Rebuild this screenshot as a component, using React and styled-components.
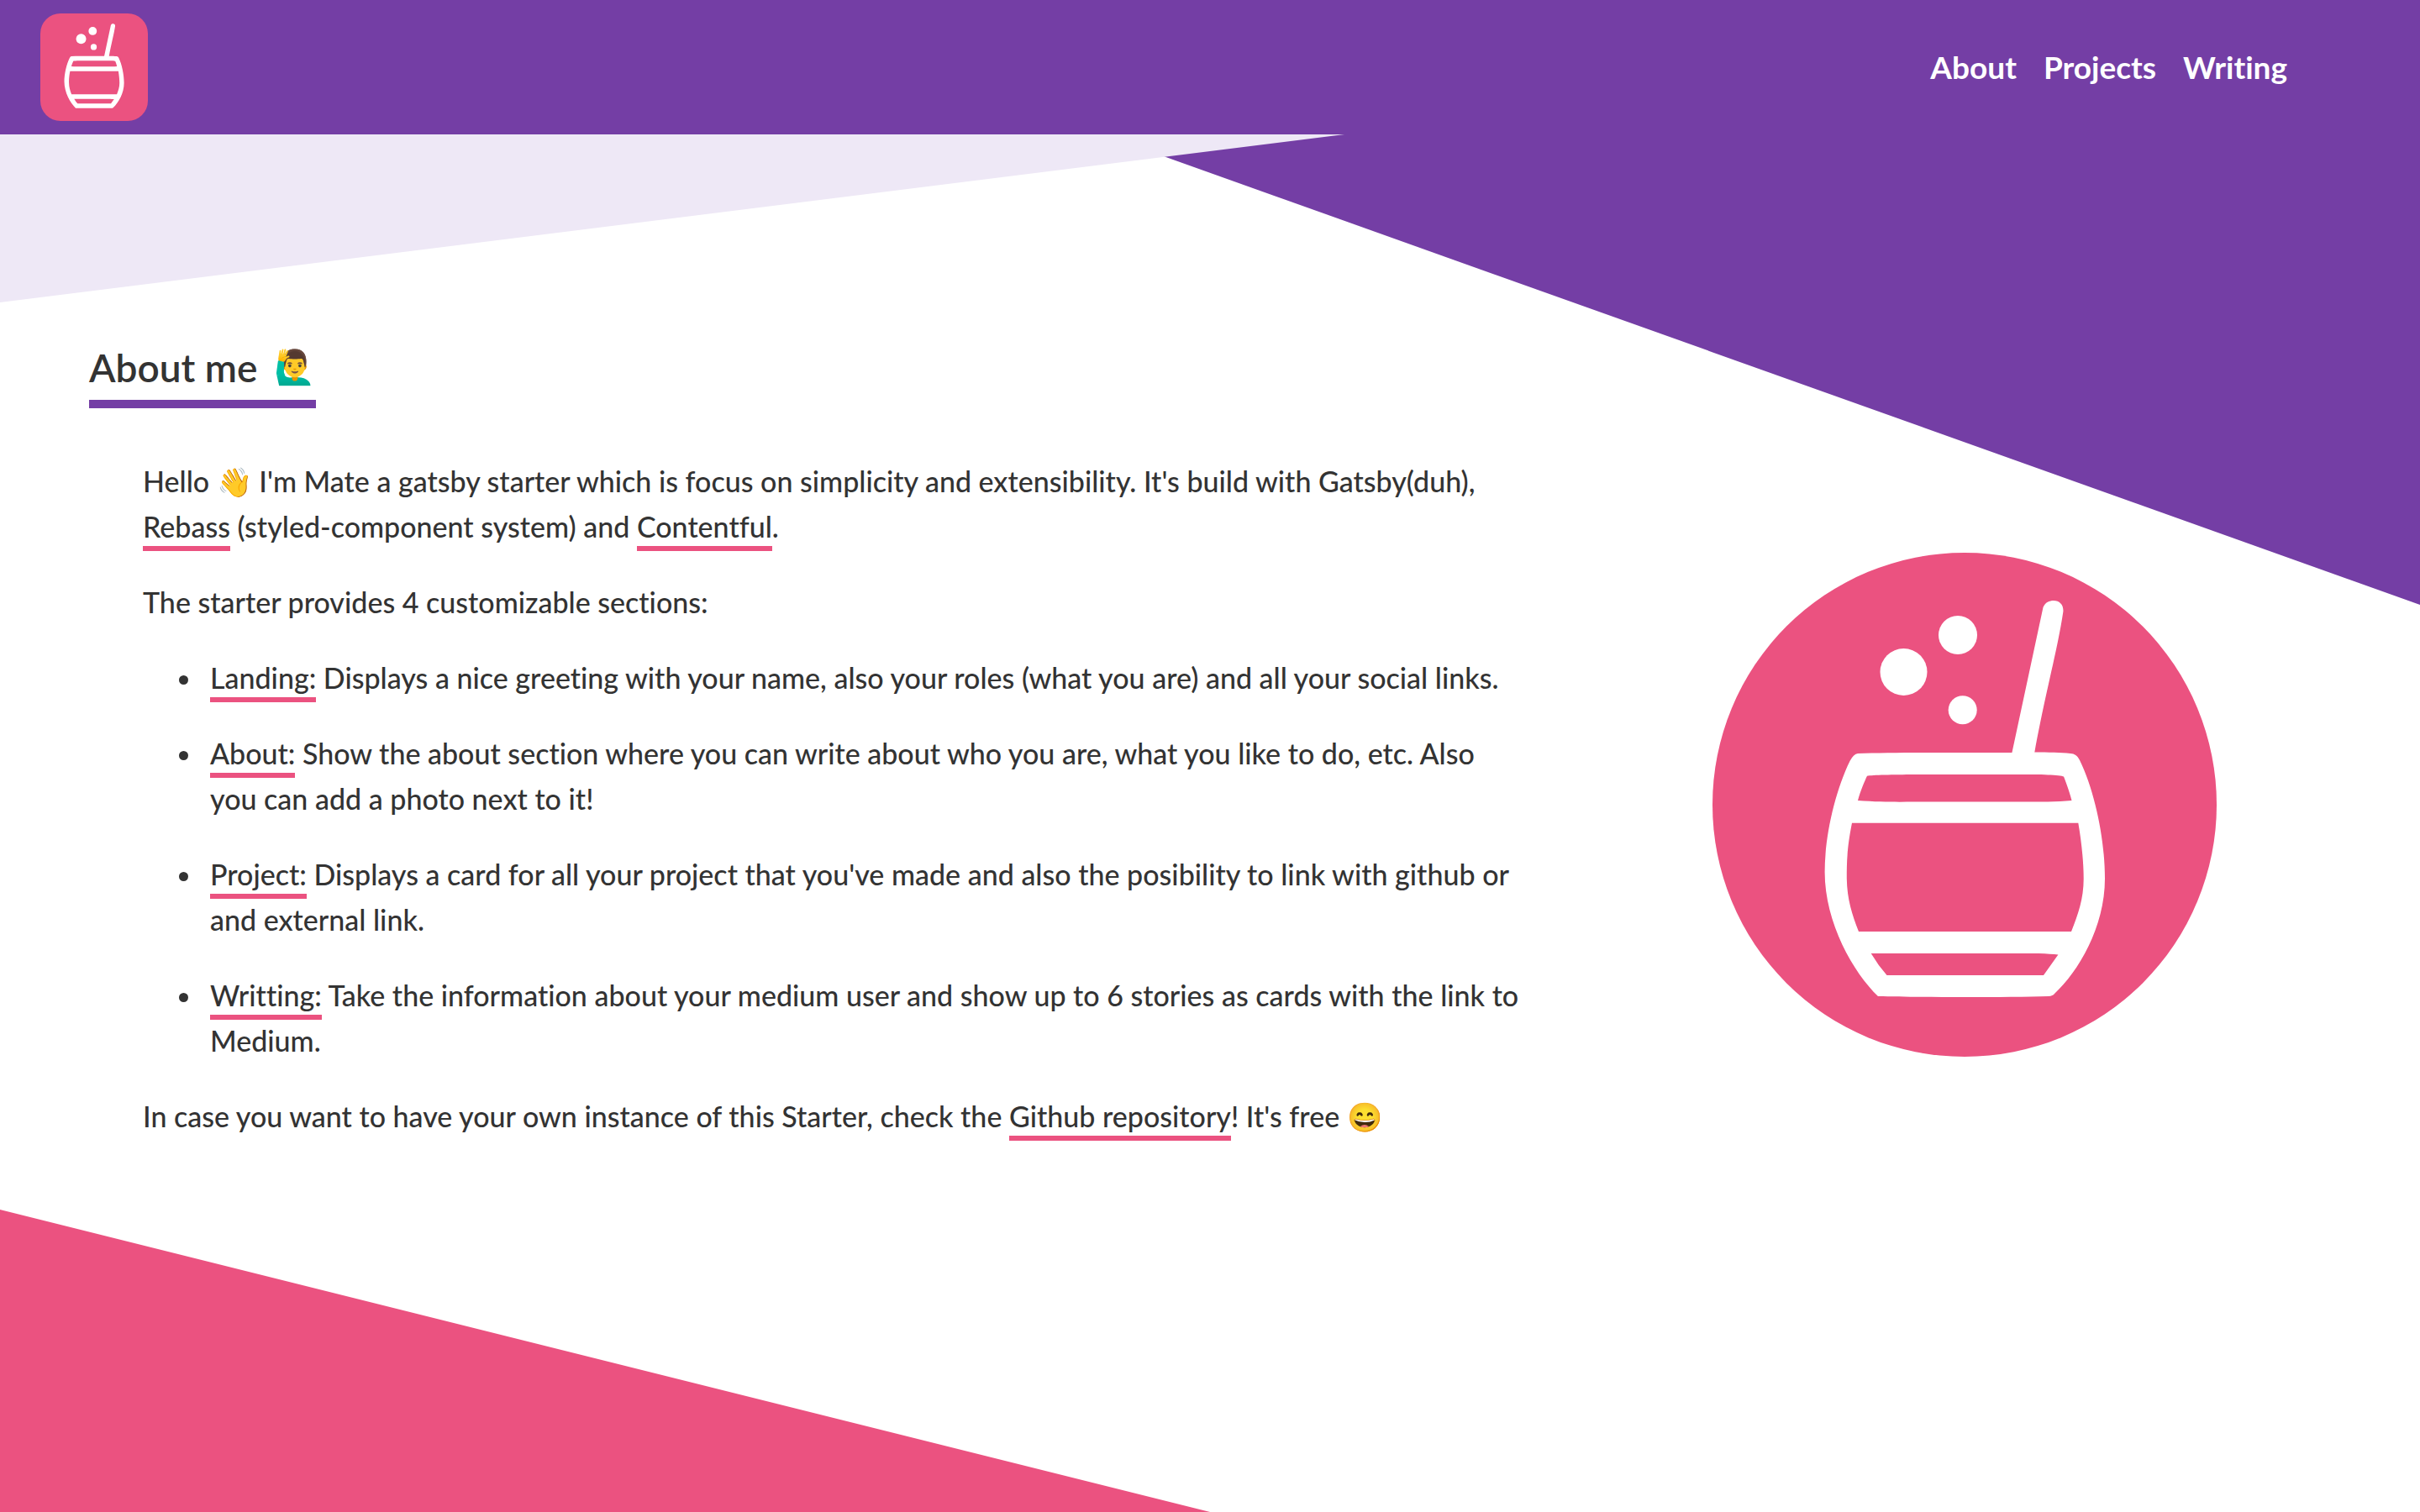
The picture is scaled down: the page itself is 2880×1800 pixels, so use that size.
import React from 'react';
import styled, { createGlobalStyle, ThemeProvider } from 'styled-components';

const theme = {
  colors: {
    background: '#ffffff',
    backgroundDark: '#eee8f6',
    text: '#333333',
    primary: '#743ea5',
    secondary: '#eb5280',
  },
};

const GlobalStyle = createGlobalStyle`
  *, *::before, *::after {
    box-sizing: border-box;
  }

  body {
    margin: 0;
    color: ${({ theme: t }) => t.colors.text};
    background: ${({ theme: t }) => t.colors.background};
    font-family: Lato, "Open Sans", sans-serif;
    font-size: 34px;
    font-weight: 500;
    font-variant-ligatures: none;
    line-height: 54px;
  }
`;

const Header = styled.header`
  position: fixed;
  inset: 0 0 auto;
  z-index: 2;
  display: flex;
  align-items: center;
  justify-content: space-between;
  padding: 16px 158px 16px 48px;
  background: ${({ theme: t }) => t.colors.primary};
`;

const HomeLink = styled.a`
  display: flex;
  width: 128px;
  height: 128px;
`;

const Nav = styled.nav`
  display: flex;
  gap: 32px;
`;

const NavLink = styled.a`
  color: ${({ theme: t }) => t.colors.background};
  font-size: 37px;
  font-weight: 700;
  text-decoration: none;
`;

const Section = styled.section`
  position: relative;
  display: flex;
  flex-direction: column;
  justify-content: center;
  min-height: 100vh;
  padding: 0 106px;
  overflow: hidden;
`;

const Triangle = styled.div`
  position: absolute;
  ${({ $side }) => $side}: 0;
  ${({ $edge }) => $edge}: 0;
  width: ${({ $width }) => $width}vw;
  height: ${({ $height }) => $height}vh;
  background: ${({ theme: t, $color }) => t.colors[$color]};
  clip-path: polygon(${({ $points }) => $points});
`;

const Heading = styled.h2`
  position: relative;
  align-self: flex-start;
  display: flex;
  gap: 20px;
  margin: 0 0 24px;
  padding-bottom: 8px;
  border-bottom: 10px solid ${({ theme: t }) => t.colors.primary};
  font-size: 46px;
  font-weight: 600;
  line-height: 60px;
`;

const HeadingIcon = styled.span`
  font-size: 40px;
  line-height: 56px;
`;

const Columns = styled.div`
  position: relative;
  display: grid;
  grid-template-columns: 2fr 1fr;
  align-items: center;
`;

const Story = styled.div`
  padding: 0 72px 0 64px;
`;

const Paragraph = styled.p`
  margin: 36px 0;
`;

const List = styled.ul`
  margin: 36px 0;
  padding-left: 72px;
`;

const Item = styled.li`
  padding-left: 8px;
`;

const TextLink = styled.a`
  padding-bottom: 3px;
  border-bottom: 6px solid ${({ theme: t }) => t.colors.secondary};
  color: inherit;
  text-decoration: none;
`;

const Photo = styled.div`
  display: flex;
  justify-content: center;
  padding: 14px 0 0 18px;
`;

const Artwork = styled.svg`
  display: block;
  width: 100%;
  max-width: 600px;
  border-radius: ${({ $radius }) => $radius};
  background: ${({ theme: t }) => t.colors.secondary};
`;

const Mate = ({ label, radius }) => (
  <Artwork viewBox="0 0 600 600" role="img" aria-label={label} $radius={radius}>
    <g fill="#fff">
      <circle cx="227.5" cy="142" r="28" />
      <circle cx="292" cy="98" r="23" />
      <circle cx="297.7" cy="187.3" r="17" />
      <path d="M356 240 L393.5 65 C396 59 401 57 406 57 C413 57 418 62 417.4 70 C411 114 396 167 382.9 240 Z" />
      <path
        fillRule="evenodd"
        d="M173 239 C220 237.5 300 238 356 238 L383 237.6 C400 237.6 414 238 426 239 C431 239.5 434 241 437 247
           C455 284 467 341 467 388 C467 446 435 499 407 525 Q405 527.6 400 528
           C350 529.4 250 529.4 197 528 C168 500 133.6 441 133.6 380 C133.6 337 146 284 163.5 248 Q168 239.5 173 239 Z
           M184 265.8 C181 272 176 284 173 295 C200 297 220 296.6 240 296.6 L364 296.6 C390 296.6 410 296.6 427.5 295
           C424.500 283 420.500 273 418 266.500 C414 264.500 390 264 365 264 L240 264 C215 264.200 190 264.500 184 265.8 Z
           M166 321.800 C160 352 159.800 368 159.800 388 C160.200 412 166 431 174 451 L427 451
           C435 431 441.700 412 441.700 388 C441.700 368 439 343 435.300 321.800 Z
           M188.700 477 Q197 491 207.500 503 L394 503 L411.400 478.500 C400 477 380 477 360 477 Z"
      />
    </g>
  </Artwork>
);

const navItems = [
  { label: 'About', href: '#about' },
  { label: 'Projects', href: '#projects' },
  { label: 'Writing', href: '#writing' },
];

const features = [
  {
    name: 'Landing:',
    href: '#landing',
    text: 'Displays a nice greeting with your name, also your roles (what you are) and all your social links.',
  },
  {
    name: 'About:',
    href: '#about',
    text: 'Show the about section where you can write about who you are, what you like to do, etc. Also you can add a photo next to it!',
  },
  {
    name: 'Project:',
    href: '#projects',
    text: "Displays a card for all your project that you've made and also the posibility to link with github or and external link.",
  },
  {
    name: 'Writting:',
    href: '#writing',
    text: 'Take the information about your medium user and show up to 6 stories as cards with the link to Medium.',
  },
];

export default function App() {
  return (
    <ThemeProvider theme={theme}>
      <GlobalStyle />
      <Header>
        <HomeLink href="#landing">
          <Mate label="Mate logo" radius="24px" />
        </HomeLink>
        <Nav>
          {navItems.map(({ label, href }) => (
            <NavLink key={label} href={href}>
              {label}
            </NavLink>
          ))}
        </Nav>
      </Header>
      <main>
        <Section id="about">
          <Triangle $side="right" $edge="top" $width={70} $height={40} $color="primary" $points="0 0, 100% 0, 100% 100%" />
          <Triangle $side="left" $edge="top" $width={100} $height={20} $color="backgroundDark" $points="0 0, 100% 0, 0 100%" />
          <Triangle $side="left" $edge="bottom" $width={50} $height={20} $color="secondary" $points="0 0, 100% 100%, 0 100%" />
          <Heading>
            About me <HeadingIcon role="img" aria-label="raising hand">🙋‍♂️</HeadingIcon>
          </Heading>
          <Columns>
            <Story>
              <Paragraph>
                Hello 👋 I'm Mate a gatsby starter which is focus on simplicity and extensibility. It's build with
                Gatsby(duh), <TextLink href="#rebass">Rebass</TextLink> (styled-component system) and{' '}
                <TextLink href="#contentful">Contentful</TextLink>.
              </Paragraph>
              <Paragraph>The starter provides 4 customizable sections:</Paragraph>
              <List>
                {features.map(({ name, href, text }) => (
                  <Item key={name}>
                    <Paragraph>
                      <TextLink href={href}>{name}</TextLink> {text}
                    </Paragraph>
                  </Item>
                ))}
              </List>
              <Paragraph>
                In case you want to have your own instance of this Starter, check the{' '}
                <TextLink href="#repository">Github repository</TextLink>! It's free 😄
              </Paragraph>
            </Story>
            <Photo>
              <Mate label="Mate" radius="50%" />
            </Photo>
          </Columns>
        </Section>
      </main>
    </ThemeProvider>
  );
}
